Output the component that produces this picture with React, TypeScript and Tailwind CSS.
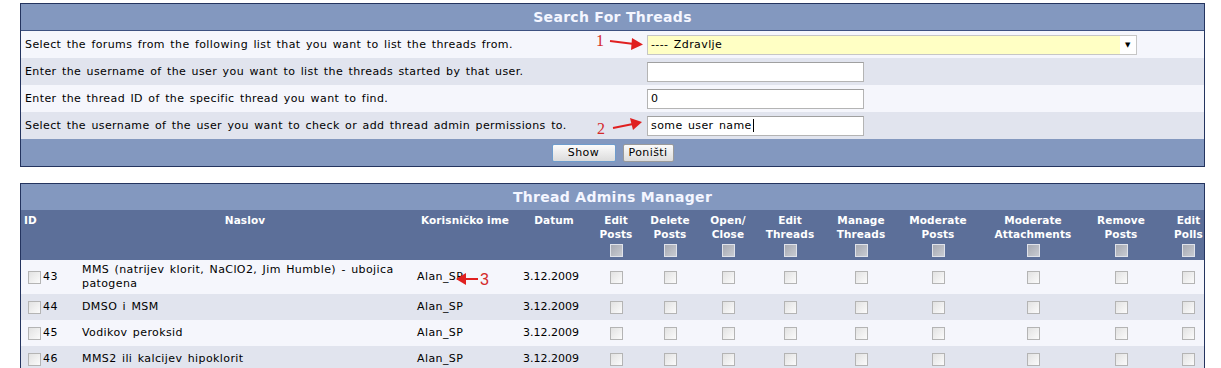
import React from "react";

const searchRows = [
  { label: "Select the forums from the following list that you want to list the threads from.", kind: "select" },
  { label: "Enter the username of the user you want to list the threads started by that user.", kind: "input", value: "" },
  { label: "Enter the thread ID of the specific thread you want to find.", kind: "input", value: "0" },
  { label: "Select the username of the user you want to check or add thread admin permissions to.", kind: "caret", value: "some user name" },
];

const permCols = [
  ["Edit", "Posts"],
  ["Delete", "Posts"],
  ["Open/", "Close"],
  ["Edit", "Threads"],
  ["Manage", "Threads"],
  ["Moderate", "Posts"],
  ["Moderate", "Attachments"],
  ["Remove", "Posts"],
  ["Edit", "Polls"],
];

const threads = [
  { id: 43, title: ["MMS (natrijev klorit, NaClO2, Jim Humble) - ubojica", "patogena"] },
  { id: 44, title: ["DMSO i MSM"] },
  { id: 45, title: ["Vodikov peroksid"] },
  { id: 46, title: ["MMS2 ili kalcijev hipoklorit"] },
];

const gridCols =
  "grid grid-cols-[56px_336px_104px_74px_50px_58px_58px_66px_76px_78px_112px_64px_51px]";

function Box({ head }: { head?: boolean }) {
  return head ? (
    <span className="inline-block w-[13px] h-[13px] border border-[#dfe2ea] bg-gradient-to-br from-[#a6a9b2] to-[#c8cbd2]" />
  ) : (
    <span className="inline-block w-[13px] h-[13px] border border-[#b4b4b4] bg-gradient-to-br from-[#e2e2e2] to-[#fbfbfb]" />
  );
}

export default function App() {
  return (
    <div className="relative w-[1221px] h-[368px] overflow-hidden bg-white text-black text-[11px] leading-[14px] tracking-[0.4px] [word-spacing:1.5px] font-['DejaVu_Sans','Liberation_Sans',sans-serif]">
      <div className="ml-[20px] w-[1185px] pt-[3px]">
        {/* search box */}
        <div className="border border-[#24345f]">
          <div className="h-[27px] bg-[#8398bf] border-b border-[#3d5180] flex items-center justify-center text-[14px] font-bold tracking-[0.3px] [word-spacing:0px] text-[#f4f6ff]">
            Search For Threads
          </div>
          {searchRows.map((row, i) => (
            <div
              key={i}
              className={`h-[27px] flex items-center ${i % 2 === 0 ? "bg-[#f5f6fc]" : "bg-[#e1e4ee]"}`}
            >
              <div className="w-[626px] pl-[4px]">{row.label}</div>
              {row.kind === "select" ? (
                <div className="w-[490px] h-[20px] border border-[#c6c6c6] bg-white flex items-center">
                  <div className="flex-1 h-full bg-[#ffffc4] pl-[3px] flex items-center">---- Zdravlje</div>
                  <div className="w-[16px] flex justify-center text-[7px]">▼</div>
                </div>
              ) : (
                <div className="w-[217px] h-[20px] border border-[#b4b4b4] border-t-[#a0a0a0] bg-white pl-[3px] flex items-center">
                  {row.value}
                  {row.kind === "caret" && <span className="w-[1px] h-[13px] bg-black ml-[1px]" />}
                </div>
              )}
            </div>
          ))}
          <div className="h-[27px] bg-[#8398bf] flex items-center justify-center gap-[7px]">
            <button className="w-[64px] h-[18px] rounded-[2px] border border-[#6f9ccc] bg-gradient-to-b from-[#fbfbfb] to-[#dcdcdc] text-[11px]">
              Show
            </button>
            <button className="w-[51px] h-[18px] rounded-[2px] border border-[#9a9a9a] bg-gradient-to-b from-[#fbfbfb] to-[#dcdcdc] text-[11px]">
              Poništi
            </button>
          </div>
        </div>

        {/* thread admins */}
        <div className="mt-[16px] border border-[#24345f] border-b-0">
          <div className="h-[26px] bg-[#8398bf] flex items-center justify-center text-[14px] font-bold tracking-[0.3px] [word-spacing:0px] text-[#f4f6ff]">
            Thread Admins Manager
          </div>
          <div className={`${gridCols} h-[50px] bg-[#5c6f99] text-white font-bold text-[10.5px] leading-[14px] tracking-[0.1px] [word-spacing:0px] pt-[3px]`}>
            <div className="pl-[3px]">ID</div>
            <div className="text-center">Naslov</div>
            <div className="text-center">Korisničko ime</div>
            <div className="text-center">Datum</div>
            {permCols.map((c, i) => (
              <div
                key={i}
                className={`flex flex-col items-center ${i === permCols.length - 1 ? "pl-[20px]" : ""}`}
              >
                <span>{c[0]}</span>
                <span>{c[1]}</span>
                <span className="mt-[3px] leading-none">
                  <Box head />
                </span>
              </div>
            ))}
          </div>
          {threads.map((t, i) => (
            <div
              key={t.id}
              className={`${gridCols} items-center ${i === 0 ? "h-[34px]" : "h-[26px]"} ${i % 2 === 0 ? "bg-[#f5f6fc]" : "bg-[#e1e4ee]"}`}
            >
              <div className="pl-[7px] flex items-center gap-[2px]">
                <Box />
                <span>{t.id}</span>
              </div>
              <div className="pl-[5px] leading-[14px]">
                {t.title.map((l) => (
                  <div key={l}>{l}</div>
                ))}
              </div>
              <div className="pl-[4px]">Alan_SP</div>
              <div className="pl-[6px] tracking-normal">3.12.2009</div>
              {permCols.map((_, j) => (
                <div
                  key={j}
                  className={`flex justify-center ${j === permCols.length - 1 ? "pl-[20px]" : ""}`}
                >
                  <Box />
                </div>
              ))}
            </div>
          ))}
        </div>
      </div>

      {/* red annotations */}
      <span className="absolute left-[596px] top-[33px] text-[16px] leading-none text-[#d42a2a] font-['Liberation_Serif',serif]">1</span>
      <svg className="absolute left-[608px] top-[36px]" width="38" height="16" viewBox="0 0 38 16">
        <line x1="2" y1="5" x2="26" y2="8" stroke="#e02020" strokeWidth="2" />
        <polygon points="24,2 35,8.5 23,14" fill="#e02020" />
      </svg>
      <span className="absolute left-[597px] top-[121px] text-[16px] leading-none text-[#d42a2a] font-['Liberation_Serif',serif]">2</span>
      <svg className="absolute left-[611px] top-[116px]" width="34" height="16" viewBox="0 0 34 16">
        <line x1="2" y1="12" x2="22" y2="8" stroke="#e02020" strokeWidth="2" />
        <polygon points="19,2 31,6 22,14" fill="#e02020" />
      </svg>
      <svg className="absolute left-[454px] top-[272px]" width="26" height="14" viewBox="0 0 26 14">
        <polygon points="2,7 12,1 12,13" fill="#e02020" />
        <line x1="10" y1="7" x2="24" y2="7" stroke="#e02020" strokeWidth="2" />
      </svg>
      <span className="absolute left-[480px] top-[272px] text-[16px] leading-none text-[#d42a2a] font-['Liberation_Sans',sans-serif]">3</span>
    </div>
  );
}
